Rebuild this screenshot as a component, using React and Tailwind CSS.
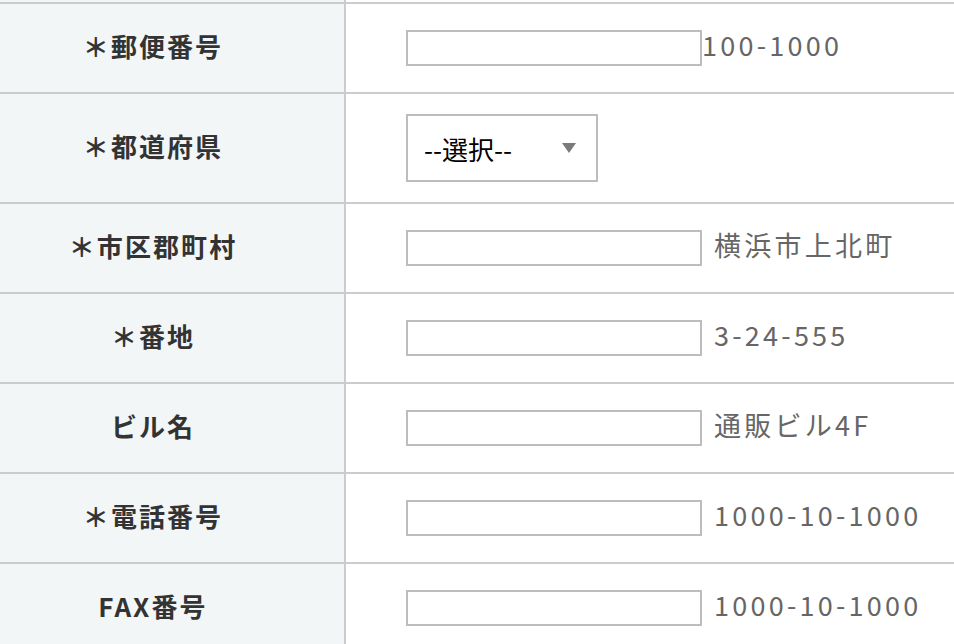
import React from 'react';

const rows = [
    { label: '＊郵便番号', hint: '100-1000', tight: true },
    { label: '＊都道府県', select: true },
    { label: '＊市区郡町村', hint: '横浜市上北町' },
    { label: '＊番地', hint: '3-24-555' },
    { label: 'ビル名', hint: '通販ビル4F' },
    { label: '＊電話番号', hint: '1000-10-1000' },
    { label: 'FAX番号', hint: '1000-10-1000' },
];

const font = { fontFamily: '"Noto Sans CJK JP", "Noto Sans", sans-serif' };

function SelectBox() {
    return (
        <div className="relative w-[192px] h-[68px]">
            <select
                defaultValue=""
                className="appearance-none w-full h-full border-2 border-[#bdbdbd] bg-white pl-[16px] text-[26px] text-black outline-none"
            >
                <option value="">--選択--</option>
            </select>
            {/* arrow sits over the select */}
            <svg className="absolute right-[21px] top-[28px] pointer-events-none" width="16" height="12" viewBox="0 0 16 12">
                <path d="M1 1 L15 1 L8 11 Z" fill="#7a7a7a" />
            </svg>
        </div>
    );
}

export default function App() {
    return (
        <div className="w-[954px] h-[644px] overflow-hidden bg-white" style={font}>
            {/* tail of the row above */}
            <div className="flex h-[2px]">
                <div className="w-[346px] bg-[#f3f6f7] border-r-2 border-[#cccccc]" />
            </div>

            {rows.map((row, index) => (
                <div key={index} className={`flex border-t-2 border-[#cccccc] ${row.select ? 'h-[110px]' : 'h-[90px]'}`}>
                    <div className="w-[346px] shrink-0 bg-[#f3f6f7] border-r-2 border-[#cccccc] flex items-center justify-center pr-[38px]">
                        <span className="text-[26px] font-bold text-[#333333] tracking-[0.08em] mb-[6px]">{row.label}</span>
                    </div>
                    <div className="flex-1 flex items-center pl-[60px]">
                        {row.select ? (
                            <SelectBox />
                        ) : (
                            <>
                                <input type="text" className="w-[296px] h-[36px] border-2 border-[#bdbdbd] bg-white outline-none" />
                                <span className={`text-[27px] text-[#666666] tracking-[0.12em] mb-[6px] ${row.tight ? 'ml-0' : 'ml-[12px]'}`}>
                                    {row.hint}
                                </span>
                            </>
                        )}
                    </div>
                </div>
            ))}
        </div>
    );
}
